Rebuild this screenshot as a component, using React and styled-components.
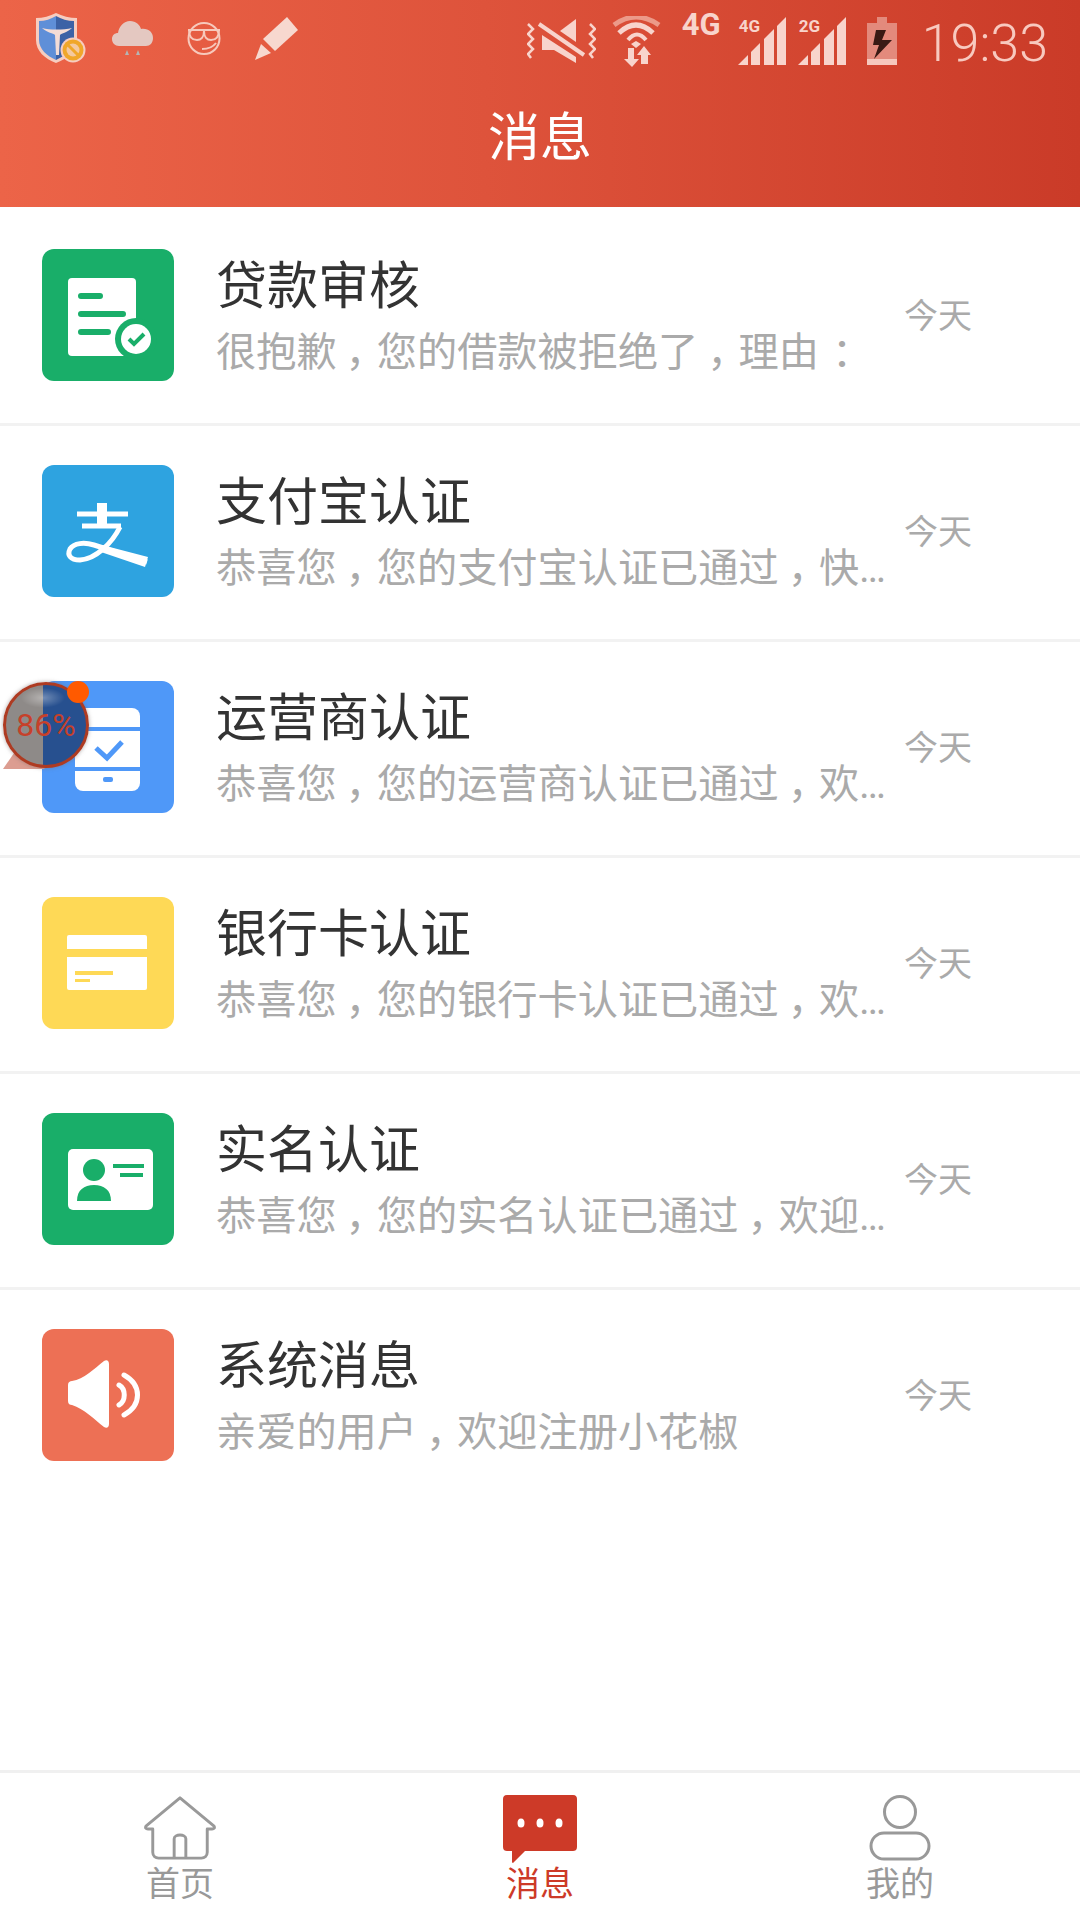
import React from "react";
import styled, { createGlobalStyle } from "styled-components";

const GlobalStyle = createGlobalStyle`
  html, body {
    margin: 0;
    padding: 0;
    background: #fff;
  }
  * {
    box-sizing: border-box;
  }
`;

const FONT = `Roboto, "Noto Sans CJK SC", sans-serif`;

//status bar icons
const ShieldIcon = () => (
  <svg width="50" height="50" viewBox="0 0 50 50">
    <path d="M20 0 C26 3 34 5 41 5 V27 C41 38 31 46 20 50 C9 46 0 38 0 27 V5 C7 5 14 3 20 0 Z" fill="#f6cdc0" />
    <path d="M20 3 V47 C11 43 3 36 3 27 V8 C9 8 15 6 20 3 Z" fill="#5f8fd8" />
    <path d="M20 3 C25 6 32 8 38 8 V27 C38 36 29 43 20 47 Z" fill="#3c62a6" />
    <path d="M6 15 C14 17 27 17 36 15 C30 20 26 20 24 22 L23 42 H20 L19 22 C17 20 12 20 6 15 Z" fill="#f3dcd6" />
    <circle cx="37" cy="37" r="12.5" fill="#f6cdc0" />
    <circle cx="37" cy="37" r="10.5" fill="#f0a72a" />
    <circle cx="37" cy="37" r="6.5" fill="#f4c9a0" />
    <path d="M32 32 L42 42" stroke="#f0a72a" strokeWidth="3" />
  </svg>
);

const CloudIcon = () => (
  <svg width="41" height="34" viewBox="0 0 41 34">
    <path d="M7 25 C3 25 0 22 0 18 C0 14 3 12 6 12 C7 5 12 0 18 0 C24 0 28 4 29 8 C36 7 41 11 41 17 C41 22 38 25 34 25 Z" fill="#e4c8c1" />
    <path d="M15 29 L17 34 H13 Z M26 29 L28 34 H24 Z" fill="#b5b5b3" />
  </svg>
);

const FaceIcon = () => (
  <svg width="34" height="33" viewBox="0 0 34 33" fill="none" stroke="#f7c9bc" strokeWidth="2">
    <circle cx="17" cy="16.5" r="15.5" />
    <path d="M1 8 H33" />
    <path d="M2 8 C2 16 6 18 10 18 C14 18 17 15 17 9 C17 15 20 18 24 18 C28 18 32 16 32 8" />
    <path d="M15 27 C21 27 26 25 29 21" />
  </svg>
);

const PencilIcon = () => (
  <svg width="43" height="43" viewBox="0 0 43 43">
    <path d="M32 0 L43 13 L20 34 L8 22 Z" fill="#f7d8cf" />
    <path d="M6 27 L16 36 L0 43 Z" fill="#f7d8cf" />
  </svg>
);

const MuteIcon = () => (
  <svg width="69" height="44" viewBox="0 0 69 44" fill="none" stroke="#f8d4cc">
    <path d="M1 5 L6 10 L1 15 L6 20 L1 25 L6 30 L1 35 L4 39" strokeWidth="2.5" />
    <path d="M63 5 L68 10 L63 15 L68 20 L63 25 L68 30 L63 35 L66 39" strokeWidth="2.5" />
    <path d="M33 12 L49 0 V23 Z" fill="#f8d4cc" stroke="none" />
    <path d="M15 16 L49 38 V44 L27 31 H15 Z" fill="#f8d4cc" stroke="none" />
    <path d="M12 5 L57 36" strokeWidth="4" />
  </svg>
);

const WifiIcon = () => (
  <svg width="49" height="51" viewBox="0 0 49 51" fill="none">
    <path d="M2 9 Q24 -7 47 9" stroke="#ec9a89" strokeWidth="5" />
    <path d="M7 17 Q24 1 41 17" stroke="#f8d4cc" strokeWidth="5" />
    <path d="M16 24 Q25 13 34 24" stroke="#f8d4cc" strokeWidth="4" />
    <path d="M19 28 L24 25 L29 28 L24 32 Z" fill="#f8d4cc" />
    <path d="M16 32 H22 V43 H27 L20 51 L12 43 H16 Z" fill="#f8d4cc" />
    <path d="M32 30 L39 39 H36 V48 H29 V39 H25 Z" fill="#f8d4cc" />
  </svg>
);

const SignalIcon = ({ label }) => (
  <SignalBox>
    <SignalLabel>{label}</SignalLabel>
    <svg width="48" height="48" viewBox="0 0 48 48" fill="#f8d4cc">
      <path d="M0 48 L10 38 V48 Z" />
      <path d="M13 35 L22 26 V48 H13 Z" />
      <path d="M26 22 L36 12 V48 H26 Z" />
      <path d="M39 9 L48 0 V48 H39 Z" />
    </svg>
  </SignalBox>
);

const BatteryIcon = () => (
  <svg width="30" height="48" viewBox="0 0 30 48">
    <rect x="10" y="0" width="10" height="6" fill="#e38a7c" />
    <rect x="0" y="6" width="30" height="36" fill="#e38a7c" />
    <rect x="0" y="42" width="30" height="6" fill="#f6c8bd" />
    <path d="M9 13 H19 L15 23 H25 L7 42 L12 28 H6 Z" fill="#3a1a14" />
  </svg>
);

//list icons, drawn on the 132px tile
const LoanIcon = () => (
  <svg width="132" height="132" viewBox="0 0 132 132">
    <rect x="26" y="29" width="68" height="78" rx="4" fill="#fff" />
    <g stroke="#19ae69" strokeWidth="6" strokeLinecap="round">
      <path d="M39 47 H58 M39 65 H81 M39 83 H66" />
    </g>
    <circle cx="94" cy="90" r="21" fill="#19ae69" />
    <circle cx="94" cy="90" r="15" fill="#fff" />
    <path d="M87 90 L92 95 L102 85" fill="none" stroke="#19ae69" strokeWidth="4" />
  </svg>
);

const AlipayIcon = () => (
  <svg width="132" height="132" viewBox="0 0 132 132" fill="none" stroke="#fff">
    <path d="M35 49 H86" strokeWidth="5" />
    <path d="M60 38 V60" strokeWidth="10" />
    <path d="M40 61 H79" strokeWidth="5" />
    <path d="M78 62 C70 78 54 94 38 95 C28 95 25 90 28 84 C32 78 42 77 52 80 L105 97" strokeWidth="5" />
    <path d="M60 80 L106 92 L103 102 L56 86 Z" fill="#fff" stroke="none" />
  </svg>
);

const PhoneIcon = () => (
  <svg width="132" height="132" viewBox="0 0 132 132">
    <rect x="33" y="27" width="65" height="83" rx="8" fill="#fff" />
    <path d="M33 48 H98 M33 88 H98" stroke="#4f98f8" strokeWidth="4" />
    <rect x="61" y="96" width="10" height="5" rx="2" fill="#4f98f8" />
    <path d="M54 67 L65 77 L80 61" fill="none" stroke="#4f98f8" strokeWidth="5" />
  </svg>
);

const CardIcon = () => (
  <svg width="132" height="132" viewBox="0 0 132 132">
    <rect x="25" y="38" width="80" height="55" rx="2" fill="#fff" />
    <rect x="25" y="52" width="80" height="8" fill="#fed956" />
    <rect x="33" y="74" width="38" height="4" fill="#fed956" />
    <rect x="33" y="82" width="15" height="3" fill="#fed956" />
  </svg>
);

const IdIcon = () => (
  <svg width="132" height="132" viewBox="0 0 132 132">
    <rect x="26" y="36" width="85" height="61" rx="5" fill="#fff" />
    <circle cx="52" cy="57" r="11" fill="#19ae69" />
    <path d="M35 88 C35 77 42 72 52 72 C62 72 69 77 69 88 Z" fill="#19ae69" />
    <rect x="71" y="51" width="31" height="4" fill="#19ae69" />
    <rect x="78" y="60" width="23" height="4" fill="#19ae69" />
  </svg>
);

const SpeakerIcon = () => (
  <svg width="132" height="132" viewBox="0 0 132 132">
    <path d="M26 56 C26 53 28 52 30 52 C42 50 52 40 62 32 C65 30 67 32 67 35 V95 C67 98 65 100 62 98 C52 90 42 80 30 76 C28 76 26 75 26 72 Z" fill="#fff" />
    <g fill="none" stroke="#fff" strokeWidth="5" strokeLinecap="round">
      <path d="M77 56 C84 60 84 72 77 76" />
      <path d="M82 46 C100 56 100 76 82 86" />
    </g>
  </svg>
);

//tab bar icons
const HomeIcon = () => (
  <svg width="72" height="66" viewBox="0 0 74 66" fill="none" stroke="#999" strokeWidth="3">
    <path d="M37 2 L72 31 C73 33 72 34 70 34 H65 V58 C65 62 62 64 59 64 H15 C12 64 9 62 9 58 V34 H4 C2 34 1 33 2 31 Z" strokeLinejoin="round" />
    <path d="M31 64 V44 C31 39 43 39 43 44 V64" />
  </svg>
);

const ChatIcon = () => (
  <svg width="74" height="68" viewBox="0 0 74 68">
    <path d="M4 0 H70 C73 0 74 2 74 4 V52 C74 55 72 56 70 56 H22 L10 68 C9 68 9 67 9 66 V56 H4 C2 56 0 55 0 52 V4 C0 2 1 0 4 0 Z" fill="#cd3a28" />
    <g fill="#fff">
      <ellipse cx="18" cy="28" rx="3.5" ry="4.5" />
      <ellipse cx="37" cy="28" rx="3.5" ry="4.5" />
      <ellipse cx="56" cy="28" rx="3.5" ry="4.5" />
    </g>
  </svg>
);

const UserIcon = () => (
  <svg width="62" height="66" viewBox="0 0 62 66" fill="none" stroke="#999" strokeWidth="3">
    <ellipse cx="31" cy="17" rx="15.5" ry="15.5" />
    <rect x="2" y="38" width="58" height="26" rx="13" />
  </svg>
);

const messages = [
  { title: "贷款审核", text: "很抱歉，您的借款被拒绝了，理由：", bg: "#19ae69", Icon: LoanIcon },
  { title: "支付宝认证", text: "恭喜您，您的支付宝认证已通过，快…", bg: "#2ea3e0", Icon: AlipayIcon },
  { title: "运营商认证", text: "恭喜您，您的运营商认证已通过，欢…", bg: "#4f98f8", Icon: PhoneIcon },
  { title: "银行卡认证", text: "恭喜您，您的银行卡认证已通过，欢…", bg: "#fed956", Icon: CardIcon },
  { title: "实名认证", text: "恭喜您，您的实名认证已通过，欢迎…", bg: "#19ae69", Icon: IdIcon },
  { title: "系统消息", text: "亲爱的用户，欢迎注册小花椒", bg: "#ed7055", Icon: SpeakerIcon },
];

const tabs = [
  { label: "首页", Icon: HomeIcon },
  { label: "消息", Icon: ChatIcon, active: true },
  { label: "我的", Icon: UserIcon },
];

// the reference font sets ，and ： further right in their cell
const withPunctuation = (text) =>
  text.split(/([，：])/).map((part, index) =>
    part === "，" || part === "：" ? (
      <Punctuation key={index} $shift={part === "，" ? 9 : 13}>
        {part}
      </Punctuation>
    ) : (
      part
    )
  );

const App = () => {
  return (
    <>
      <GlobalStyle />
      <Page>
        <Header>
          <StatusBar>
            <StatusGroup>
              <ShieldIcon />
              <CloudIcon />
              <FaceIcon />
              <PencilIcon />
            </StatusGroup>
            <StatusGroupRight>
              <MuteIcon />
              <WifiIcon />
              <NetworkLabel>4G</NetworkLabel>
              <SignalIcon label="4G" />
              <SignalIcon label="2G" />
              <BatteryIcon />
              <Clock>19:33</Clock>
            </StatusGroupRight>
          </StatusBar>
          <PageTitle>消息</PageTitle>
        </Header>
        <MessageList>
          {messages.map(({ title, text, bg, Icon }) => (
            <MessageRow key={title}>
              <IconTile $bg={bg}>
                <Icon />
              </IconTile>
              <MessageBody>
                <MessageTitle>{title}</MessageTitle>
                <MessageText>{withPunctuation(text)}</MessageText>
              </MessageBody>
              <MessageDate>今天</MessageDate>
            </MessageRow>
          ))}
        </MessageList>
        <TabBar>
          {tabs.map(({ label, Icon, active }) => (
            <Tab key={label} $active={active}>
              <TabIcon>
                <Icon />
              </TabIcon>
              {label}
            </Tab>
          ))}
        </TabBar>
        <FloatBall>
          <BallTail />
          <BallBody>86%</BallBody>
          <BallDot />
        </FloatBall>
      </Page>
    </>
  );
};

const Page = styled.div`
  position: relative;
  width: 1080px;
  height: 1920px;
  display: flex;
  flex-direction: column;
  overflow: hidden;
  background: #fff;
  font-family: ${FONT};
`;

const Header = styled.header`
  height: 207px;
  flex-shrink: 0;
  background: linear-gradient(90deg, #ec6448 0%, #de533b 45%, #ca3b28 100%);
`;

const StatusBar = styled.div`
  height: 84px;
  display: flex;
  justify-content: space-between;
  align-items: center;
  padding: 0 32px 8px 36px;
`;

const StatusGroup = styled.div`
  display: grid;
  grid-template-columns: 76px 75px 68px auto;
  align-items: center;
`;

const StatusGroupRight = styled.div`
  height: 54px;
  display: grid;
  grid-template-columns: 85px 70px 56px 60px 69px 55px auto;
  align-items: center;
`;

const NetworkLabel = styled.span`
  align-self: start;
  margin-top: -1px;
  font-size: 31px;
  line-height: 30px;
  font-weight: 700;
  color: #f8d4cc;
`;

const SignalBox = styled.div`
  position: relative;
  width: 48px;
  height: 48px;
  svg {
    display: block;
  }
`;

const SignalLabel = styled.span`
  position: absolute;
  left: 1px;
  top: 1px;
  font-size: 17px;
  line-height: 16px;
  font-weight: 700;
  color: #f8d4cc;
`;

const Clock = styled.span`
  margin-top: 6px;
  font-size: 52px;
  line-height: 54px;
  font-weight: 300;
  color: #f8c9bf;
`;

const PageTitle = styled.h1`
  margin: 5px 0 0;
  height: 100px;
  line-height: 100px;
  text-align: center;
  font-size: 52px;
  font-weight: 400;
  color: #fff;
`;

const MessageList = styled.div`
  flex: 1;
`;

const MessageRow = styled.div`
  height: 216px;
  display: flex;
  align-items: center;
  padding: 0 0 3px 42px;
  border-top: 3px solid #f2f2f2;
  &:first-child {
    border-top-color: transparent;
  }
`;

const IconTile = styled.div`
  width: 132px;
  height: 132px;
  flex-shrink: 0;
  border-radius: 12px;
  background: ${(props) => props.$bg};
  svg {
    display: block;
  }
`;

const MessageBody = styled.div`
  width: 678px;
  margin-left: 42px;
  padding-top: 6px;
`;

const MessageTitle = styled.div`
  font-size: 51px;
  line-height: 66px;
  color: #333;
`;

const MessageText = styled.div`
  margin-top: 4px;
  font-size: 40.2px;
  line-height: 58px;
  color: #aaa;
  white-space: nowrap;
`;

const Punctuation = styled.span`
  padding-left: ${(props) => props.$shift}px;
  letter-spacing: -${(props) => props.$shift}px;
`;

const MessageDate = styled.div`
  margin: 0 0 4px 10px;
  font-size: 34px;
  color: #aaa;
`;

const TabBar = styled.nav`
  height: 150px;
  flex-shrink: 0;
  display: grid;
  grid-template-columns: repeat(3, 360px);
  border-top: 3px solid #f0f0f0;
`;

const Tab = styled.div`
  display: flex;
  flex-direction: column;
  align-items: center;
  padding-top: 22px;
  font-size: 34px;
  line-height: 42px;
  color: ${(props) => (props.$active ? "#cd3a28" : "#999")};
`;

const TabIcon = styled.div`
  height: 68px;
  svg {
    display: block;
  }
`;

const FloatBall = styled.div`
  position: absolute;
  left: 3px;
  top: 680px;
  width: 90px;
  height: 90px;
`;

const BallBody = styled.div`
  position: absolute;
  left: 0;
  top: 2px;
  width: 86px;
  height: 86px;
  border-radius: 50%;
  border: 3px solid #ae3b22;
  box-shadow: 0 0 4px rgba(120, 110, 110, 0.6);
  background:
    radial-gradient(ellipse 22px 10px at 46% 16%, rgba(255, 255, 255, 0.35), transparent),
    linear-gradient(90deg, #8e8a88 0 46%, #27508f 46% 100%);
  display: flex;
  align-items: center;
  justify-content: center;
  font-size: 32px;
  font-weight: 400;
  color: #c6402a;
`;

const BallTail = styled.div`
  position: absolute;
  left: 0;
  top: 62px;
  width: 42px;
  height: 27px;
  background: #dc9d91;
  clip-path: polygon(0 100%, 40% 10%, 100% 100%);
`;

const BallDot = styled.div`
  position: absolute;
  left: 64px;
  top: 1px;
  width: 22px;
  height: 22px;
  border-radius: 50%;
  background: #ff5a00;
`;

export default App;
